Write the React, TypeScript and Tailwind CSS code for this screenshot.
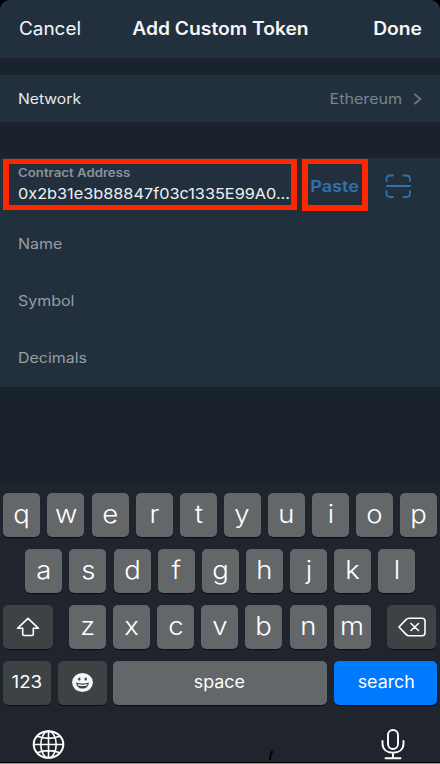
import type { ReactNode } from "react";

function Key({ children, className = "" }: { children: ReactNode; className?: string }) {
  return (
    <div
      className={`flex h-[44px] shrink-0 items-center justify-center rounded-[5px] text-white shadow-[0_1px_0_#0b0e13] ${className}`}
    >
      {children}
    </div>
  );
}

function Letter({ char }: { char: string }) {
  return (
    <Key className="w-[37px] bg-[#636769]">
      <span className="-mt-[1px] block scale-x-[1.1] text-[25px] leading-none font-[350]">{char}</span>
    </Key>
  );
}

function Letters({ chars }: { chars: string }) {
  return (
    <div className="flex gap-[7.1px]">
      {chars.split("").map((c) => (
        <Letter key={c} char={c} />
      ))}
    </div>
  );
}

function Field({ label, last = false }: { label: string; last?: boolean }) {
  return (
    <div className={`ml-[18px] flex h-[57px] items-center ${last ? "" : "border-b border-[#26343f]"}`}>
      <span className="origin-left scale-x-[1.14] text-[14px] text-[#989da2]">{label}</span>
    </div>
  );
}

export default function App() {
  return (
    <div className="h-[764px] w-[440px] overflow-hidden bg-black font-['Inter','Liberation_Sans',sans-serif]">
      <div className="flex h-[764px] flex-col rounded-t-[10px] bg-[#19222d]">
        <header className="flex h-[58px] shrink-0 items-center justify-between rounded-t-[10px] bg-[#22303e] pr-[18px] pb-[2px] pl-[19px] text-[18px] text-[#f5f6f7]">
          <span className="w-[90px] origin-left scale-x-[1.05]">Cancel</span>
          <span className="scale-x-[1.07] font-semibold whitespace-nowrap">Add Custom Token</span>
          <span className="w-[90px] origin-right scale-x-[1.07] text-right font-semibold">Done</span>
        </header>

        <div className="mt-[17px] flex h-[47px] shrink-0 items-center bg-[#22303e] pr-[18px] pl-[18px] text-[14px]">
          <span className="origin-left scale-x-[1.12] text-[#e6e8ea]">Network</span>
          <span className="ml-auto origin-right scale-x-[1.15] text-[#7b838b]">Ethereum</span>
          <svg className="ml-[11px]" width="9" height="12" viewBox="0 0 9 12" fill="none" stroke="#6c757e" strokeWidth="1.8">
            <path d="M1.5 1 7.3 6 1.5 11" />
          </svg>
        </div>

        <div className="mt-[36px] h-[229px] shrink-0 bg-[#22303e]">
          <div className="flex h-[57px] items-start pl-[3px]">
            <div className="mt-[1px] flex h-[51px] w-[294px] flex-col overflow-hidden border-[6px] border-t-[5px] border-b-[5px] border-[#ff2600] pt-[2px] pl-[9px]">
              <span className="w-max origin-left scale-x-[1.15] text-[11.5px] leading-[14px] font-semibold text-[#8b9299]">
                Contract Address
              </span>
              <span className="mt-[5px] w-max origin-left scale-x-[1.085] text-[15px] leading-[18px] text-[#eef0f2]">
                0x2b31e3b88847f03c1335E99A0...
              </span>
            </div>
            <div className="mt-[1px] ml-[5px] flex h-[52px] w-[66px] items-center justify-center border-[6px] border-t-[5px] border-b-[6px] border-[#ff2600]">
              <span className="mt-[2px] scale-x-[1.13] text-[16px] font-semibold text-[#3470b0]">Paste</span>
            </div>
            <svg className="mt-[16px] ml-[17px]" width="27" height="25" viewBox="0 0 27 25" fill="none" stroke="#3470b0" strokeWidth="1.8" strokeLinecap="round">
              <path d="M1.5 7V5Q1.5 1.5 5 1.5H8M18.5 1.5H21.5Q25 1.5 25 5V7M25 17V19.5Q25 23 21.5 23H18.5M8 23H5Q1.5 23 1.5 19.5V17M2 12H25" />
            </svg>
          </div>
          <Field label="Name" />
          <Field label="Symbol" />
          <Field label="Decimals" last />
        </div>

        <div className="h-[97px] shrink-0 bg-[#19222d]" />

        <div className="flex h-[280px] shrink-0 flex-col bg-[#20242d] pt-[8.5px]">
          <div className="flex flex-col gap-[12px]">
            <div className="flex pl-[3.4px]">
              <Letters chars="qwertyuiop" />
            </div>
            <div className="flex pl-[25.4px]">
              <Letters chars="asdfghjkl" />
            </div>
            <div className="flex pl-[3.4px]">
              <Key className="mr-[16px] w-[49.7px] bg-[#3d4245]">
                <svg width="24" height="20" viewBox="0 0 24 20" fill="none" stroke="white" strokeWidth="1.6" strokeLinejoin="round">
                  <path d="M12 1.3 22.5 11.3H17.3V17.2Q17.3 18.5 16 18.5H8Q6.7 18.5 6.7 17.2V11.3H1.5Z" />
                </svg>
              </Key>
              <Letters chars="zxcvbnm" />
              <Key className="ml-[16.5px] w-[49.3px] bg-[#3d4245]">
                <svg width="28" height="20" viewBox="0 0 28 20" fill="none" stroke="white" strokeWidth="1.6" strokeLinecap="round" strokeLinejoin="round">
                  <path d="M1 10 8 2.6Q9.2 1.3 11 1.3H24Q27 1.3 27 4V16Q27 18.7 24 18.7H11Q9.2 18.7 8 17.4ZM13 6.5 20.5 13.5M20.5 6.5 13 13.5" />
                </svg>
              </Key>
            </div>
            <div className="flex pl-[3.4px]">
              <Key className="mr-[7.2px] w-[47.5px] bg-[#3d4245]">
                <span className="mt-[1px] scale-x-[1.1] text-[17px]">123</span>
              </Key>
              <Key className="mr-[6px] w-[48.5px] bg-[#3d4245]">
                <svg width="21" height="19" viewBox="0 0 21 19">
                  <ellipse cx="10.5" cy="9.5" rx="10.4" ry="9.4" fill="#f4f5f6" />
                  <ellipse cx="7.3" cy="6" rx="1.2" ry="1.6" fill="#3d4245" />
                  <ellipse cx="13.7" cy="6" rx="1.2" ry="1.6" fill="#3d4245" />
                  <path d="M4 9.5Q10.5 11.3 17 9.5Q16.3 15.6 10.5 15.6T4 9.5Z" fill="#3d4245" />
                  <path d="M5.5 11Q10.5 12.3 15.5 11L15 12.4Q10.5 13.5 6 12.4Z" fill="#f4f5f6" />
                </svg>
              </Key>
              <Key className="mr-[7px] w-[214.5px] bg-[#636769]">
                <span className="scale-x-[1.05] text-[17px]">space</span>
              </Key>
              <Key className="w-[103px] bg-[#007aff]">
                <span className="ml-[1px] scale-x-[1.05] text-[17px]">search</span>
              </Key>
            </div>
          </div>
          <div className="mt-[23px] flex items-start pr-[35px] pl-[32px]">
            <svg className="mt-[2.5px]" width="33" height="29" viewBox="0 0 33 29" fill="none" stroke="white" strokeWidth="1.6">
              <ellipse cx="16.5" cy="14.5" rx="14.8" ry="13.3" strokeWidth="2" />
              <ellipse cx="16.5" cy="14.5" rx="7.7" ry="13.3" />
              <path d="M16.5 1V28M2 14.5H31M5 6.3Q16.5 10.5 28 6.3M5 22.7Q16.5 18.5 28 22.7" />
            </svg>
            <svg className="mt-[22px] ml-[203px]" width="6" height="10" viewBox="0 0 6 10" fill="none" stroke="#020203" strokeWidth="2">
              <path d="M4.5 1Q2.5 3 2 10" />
            </svg>
            <svg className="mt-[1px] ml-auto" width="24" height="31" viewBox="0 0 24 31" fill="none" stroke="white" strokeWidth="1.9" strokeLinecap="round">
              <rect x="7" y="1" width="10" height="19" rx="5" />
              <path d="M1.5 12V14.5C1.5 20.5 6 23.7 12 23.7S22.5 20.5 22.5 14.5V12M12 24V29M4.5 29.3H19.5" />
            </svg>
          </div>
          <div className="mt-auto h-[2px] shrink-0 border-b border-[#8d9093] bg-black" />
        </div>
      </div>
    </div>
  );
}
